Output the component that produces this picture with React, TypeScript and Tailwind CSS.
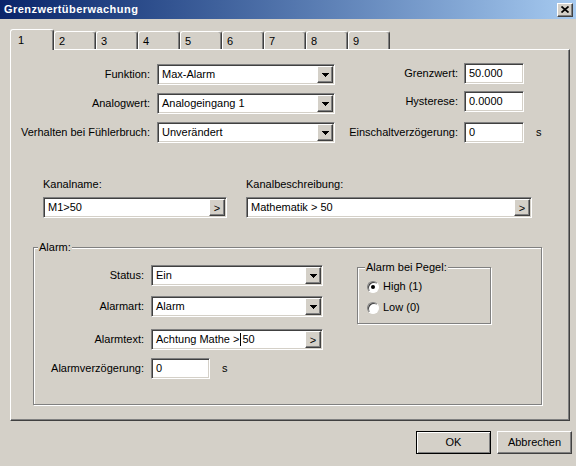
import type { ReactNode } from 'react';

const sunken =
  'bg-white border border-t-[#808080] border-l-[#808080] border-r-white border-b-white shadow-[inset_1px_1px_0_#404040,inset_-1px_-1px_0_#d4d0c8]';
const raised =
  'bg-[#d4d0c8] border border-t-white border-l-white border-r-[#404040] border-b-[#404040] shadow-[inset_-1px_-1px_0_#808080]';

const DropArrow = () => (
  <svg width="7" height="4" viewBox="0 0 7 4" shapeRendering="crispEdges">
    <rect x="0" y="0" width="7" height="1" fill="#000" />
    <rect x="1" y="1" width="5" height="1" fill="#000" />
    <rect x="2" y="2" width="3" height="1" fill="#000" />
    <rect x="3" y="3" width="1" height="1" fill="#000" />
  </svg>
);

const Combo = ({ value, w }: { value: string; w: string }) => (
  <div className={`${sunken} ${w} h-[21px] flex items-stretch p-[1px]`}>
    <span className="flex-1 flex items-center pl-[3px] leading-none">{value}</span>
    <div className={`${raised} w-[16px] flex items-center justify-center`}>
      <DropArrow />
    </div>
  </div>
);

const PickInput = ({ children, w }: { children: ReactNode; w: string }) => (
  <div className={`${sunken} ${w} h-[21px] flex items-stretch p-[1px]`}>
    <span className="flex-1 flex items-center pl-[3px] leading-none">{children}</span>
    <div className={`${raised} w-[16px] flex items-end justify-center pb-[1px] text-[11px] leading-none`}>&gt;</div>
  </div>
);

const TextInput = ({ value, w }: { value: string; w: string }) => (
  <div className={`${sunken} ${w} h-[21px] flex items-center pl-[4px] leading-none`}>{value}</div>
);

const Row = ({ label, lw, children }: { label: string; lw: string; children: ReactNode }) => (
  <div className="flex items-center">
    <span className={`${lw} text-right whitespace-nowrap leading-[13px]`}>{label}</span>
    {children}
  </div>
);

const Radio = ({ checked, label }: { checked?: boolean; label: string }) => (
  <div className="flex items-center gap-[4px]">
    <div className="w-[12px] h-[12px] rounded-full bg-white border border-t-[#808080] border-l-[#808080] border-r-white border-b-white shadow-[inset_1px_1px_0_#404040] flex items-center justify-center">
      {checked && <div className="w-[4px] h-[4px] rounded-full bg-black" />}
    </div>
    <span className="leading-[13px]">{label}</span>
  </div>
);

const tabs = ['2', '3', '4', '5', '6', '7', '8', '9'];

export default function App() {
  return (
    <div className="w-[576px] h-[466px] bg-[#d4d0c8] text-black text-[11px] font-['Liberation_Sans',Arial,sans-serif] overflow-hidden">
      {/* title bar */}
      <div className="h-[19px] bg-linear-to-r from-[#0a246a] to-[#a6caf0] flex items-center justify-between pl-[4px] pr-[3px]">
        <span className="text-white font-bold tracking-[0.45px] leading-none">Grenzwertüberwachung</span>
        <div className={`${raised} w-[16px] h-[14px] flex items-center justify-center`}>
          <svg width="8" height="7" viewBox="0 0 8 7">
            <path d="M0.5 0.5 L7.5 6.5 M7.5 0.5 L0.5 6.5" stroke="#000" strokeWidth="1.7" />
          </svg>
        </div>
      </div>

      <div className="pl-[10px] pt-[10px]">
        {/* tabs */}
        <div className="flex items-end h-[20px]">
          <div className="relative z-10 -mb-px w-[44px] h-[21px] bg-[#d4d0c8] border-l border-t border-r border-l-white border-t-white border-r-[#404040] rounded-t-[3px] shadow-[inset_-1px_0_0_#808080] pl-[7px] pt-[4px] leading-[13px]">
            1
          </div>
          {tabs.map((t) => (
            <div
              key={t}
              className="w-[42px] h-[18px] border-l border-t border-r border-l-white border-t-white border-r-[#404040] rounded-t-[3px] shadow-[inset_-1px_0_0_#808080] pl-[4px] pt-[3px] leading-[13px]"
            >
              {t}
            </div>
          ))}
        </div>

        {/* panel */}
        <div className="w-[560px] h-[372px] border border-t-white border-l-white border-r-[#404040] border-b-[#404040] shadow-[inset_-1px_-1px_0_#808080]">
          <div className="flex pt-[13px]">
            <div className="mt-[1px] flex flex-col gap-[8px]">
              <Row label="Funktion:" lw="w-[139px]">
                <div className="ml-[7px]">
                  <Combo value="Max-Alarm" w="w-[178px]" />
                </div>
              </Row>
              <Row label="Analogwert:" lw="w-[139px]">
                <div className="ml-[7px]">
                  <Combo value="Analogeingang 1" w="w-[178px]" />
                </div>
              </Row>
              <Row label="Verhalten bei Fühlerbruch:" lw="w-[139px]">
                <div className="ml-[7px]">
                  <Combo value="Unverändert" w="w-[178px]" />
                </div>
              </Row>
            </div>
            <div className="flex flex-col">
              <Row label="Grenzwert:" lw="w-[123px]">
                <div className="ml-[6px]">
                  <TextInput value="50.000" w="w-[60px]" />
                </div>
              </Row>
              <div className="mt-[7px]">
                <Row label="Hysterese:" lw="w-[123px]">
                  <div className="ml-[6px]">
                    <TextInput value="0.0000" w="w-[60px]" />
                  </div>
                </Row>
              </div>
              <div className="mt-[10px]">
                <Row label="Einschaltverzögerung:" lw="w-[123px]">
                  <div className="ml-[6px]">
                    <TextInput value="0" w="w-[60px]" />
                  </div>
                  <span className="ml-[12px] leading-[13px]">s</span>
                </Row>
              </div>
            </div>
          </div>

          {/* channel */}
          <div className="flex mt-[35px] ml-[32px] gap-[19px]">
            <div className="flex flex-col gap-[6px]">
              <span className="leading-[13px]">Kanalname:</span>
              <PickInput w="w-[184px]">M1&gt;50</PickInput>
            </div>
            <div className="flex flex-col gap-[6px]">
              <span className="leading-[13px]">Kanalbeschreibung:</span>
              <PickInput w="w-[286px]">Mathematik &gt; 50</PickInput>
            </div>
          </div>

          {/* alarm group */}
          <div className="relative mt-[29px] ml-[22px] w-[509px] h-[158px] border border-[#808080] shadow-[1px_1px_0_#fff,inset_1px_1px_0_#fff]">
            <span className="absolute left-[4px] -top-[7px] px-[1px] bg-[#d4d0c8] leading-[13px]">Alarm:</span>
            <div className="flex">
              <div className="pt-[17px] flex flex-col">
                <Row label="Status:" lw="w-[110px]">
                  <div className="ml-[7px]">
                    <Combo value="Ein" w="w-[172px]" />
                  </div>
                </Row>
                <div className="mt-[10px]">
                  <Row label="Alarmart:" lw="w-[110px]">
                    <div className="ml-[7px]">
                      <Combo value="Alarm" w="w-[172px]" />
                    </div>
                  </Row>
                </div>
                <div className="mt-[12px]">
                  <Row label="Alarmtext:" lw="w-[110px]">
                    <div className="ml-[7px]">
                      <PickInput w="w-[172px]">
                        Achtung Mathe &gt;<span className="inline-block w-px h-[13px] bg-black mx-[1px]" />50
                      </PickInput>
                    </div>
                  </Row>
                </div>
                <div className="mt-[8px]">
                  <Row label="Alarmverzögerung:" lw="w-[110px]">
                    <div className="ml-[7px]">
                      <TextInput value="0" w="w-[59px]" />
                    </div>
                    <span className="ml-[12px] leading-[13px]">s</span>
                  </Row>
                </div>
              </div>

              <div className="relative ml-[34px] mt-[19px] w-[134px] h-[57px] border border-[#808080] shadow-[1px_1px_0_#fff,inset_1px_1px_0_#fff] pl-[9px] pt-[12px] flex flex-col gap-[8px]">
                <span className="absolute left-[7px] -top-[7px] px-[1px] bg-[#d4d0c8] leading-[13px]">Alarm bei Pegel:</span>
                <Radio checked label="High (1)" />
                <Radio label="Low (0)" />
              </div>
            </div>
          </div>
        </div>
      </div>

      {/* buttons */}
      <div className="flex justify-end gap-[6px] pr-[4px] mt-[10px]">
        <div className="w-[75px] h-[23px] border border-black shadow-[inset_1px_1px_0_#fff,inset_-1px_-1px_0_#808080] flex items-center justify-center leading-none">
          OK
        </div>
        <div className={`${raised} w-[75px] h-[23px] flex items-center justify-center leading-none`}>Abbrechen</div>
      </div>
    </div>
  );
}
